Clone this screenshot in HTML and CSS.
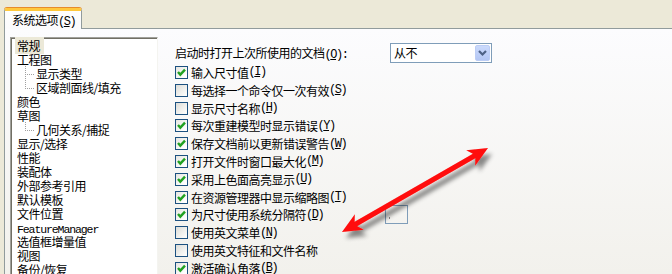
FILE: index.html
```html
<!DOCTYPE html>
<html>
<head>
<meta charset="utf-8">
<link rel="stylesheet" href="styles.css">
</head>
<body>
<div class="tabbar">
  <div class="tab">系统选项<span class="a">(<u>S</u>)</span></div>
</div>
<div class="panel">
  <ul class="tree">
    <li><span class="sel">常规</span></li>
    <li>工程图</li>
    <li class="child mid">显示类型</li>
    <li class="child">区域剖面线/填充</li>
    <li>颜色</li>
    <li>草图</li>
    <li class="child">几何关系/捕捉</li>
    <li>显示/选择</li>
    <li>性能</li>
    <li>装配体</li>
    <li>外部参考引用</li>
    <li>默认模板</li>
    <li>文件位置</li>
    <li><span class="fm">FeatureManager</span></li>
    <li>选值框增量值</li>
    <li>视图</li>
    <li>备份/恢复</li>
  </ul>
  <div class="opts">
    <div class="head">
      <span class="headlabel">启动时打开上次所使用的文档<span class="a">(<u>O</u>):</span></span>
      <div class="combo"><span class="combotext">从不</span><span class="combobtn"><svg width="13" height="15" viewBox="0 0 13 15"><polyline points="3,6 6.5,9.5 10,6" fill="none" stroke="#4d6185" stroke-width="2.2"/></svg></span></div>
    </div>
    <div class="row"><span class="cb on"><svg width="11" height="11" viewBox="0 0 11 11"><polyline points="2,5 4.3,7.6 9,2.6" fill="none" stroke="#21a121" stroke-width="2.4"/></svg></span>输入尺寸值<span class="a">(<u>I</u>)</span></div>
    <div class="row"><span class="cb"></span>每选择一个命令仅一次有效<span class="a">(<u>S</u>)</span></div>
    <div class="row"><span class="cb"></span>显示尺寸名称<span class="a">(<u>H</u>)</span></div>
    <div class="row"><span class="cb on"><svg width="11" height="11" viewBox="0 0 11 11"><polyline points="2,5 4.3,7.6 9,2.6" fill="none" stroke="#21a121" stroke-width="2.4"/></svg></span>每次重建模型时显示错误<span class="a">(<u>Y</u>)</span></div>
    <div class="row"><span class="cb on"><svg width="11" height="11" viewBox="0 0 11 11"><polyline points="2,5 4.3,7.6 9,2.6" fill="none" stroke="#21a121" stroke-width="2.4"/></svg></span>保存文档前以更新错误警告<span class="a">(<u>W</u>)</span></div>
    <div class="row"><span class="cb on"><svg width="11" height="11" viewBox="0 0 11 11"><polyline points="2,5 4.3,7.6 9,2.6" fill="none" stroke="#21a121" stroke-width="2.4"/></svg></span>打开文件时窗口最大化<span class="a">(<u>M</u>)</span></div>
    <div class="row"><span class="cb on"><svg width="11" height="11" viewBox="0 0 11 11"><polyline points="2,5 4.3,7.6 9,2.6" fill="none" stroke="#21a121" stroke-width="2.4"/></svg></span>采用上色面高亮显示<span class="a">(<u>U</u>)</span></div>
    <div class="row"><span class="cb on"><svg width="11" height="11" viewBox="0 0 11 11"><polyline points="2,5 4.3,7.6 9,2.6" fill="none" stroke="#21a121" stroke-width="2.4"/></svg></span>在资源管理器中显示缩略图<span class="a">(<u>T</u>)</span></div>
    <div class="row"><span class="sep"><span class="cb on"><svg width="11" height="11" viewBox="0 0 11 11"><polyline points="2,5 4.3,7.6 9,2.6" fill="none" stroke="#21a121" stroke-width="2.4"/></svg></span>为尺寸使用系统分隔符<span class="a">(<u>D</u>)</span></span><span class="sepbox"><span class="caret"></span></span></div>
    <div class="row"><span class="cb"></span>使用英文菜单<span class="a">(<u>N</u>)</span></div>
    <div class="row"><span class="cb"></span>使用英文特征和文件名称</div>
    <div class="row"><span class="cb on"><svg width="11" height="11" viewBox="0 0 11 11"><polyline points="2,5 4.3,7.6 9,2.6" fill="none" stroke="#21a121" stroke-width="2.4"/></svg></span>激活确认角落<span class="a">(<u>B</u>)</span></div>
  </div>
</div>
<svg class="arrow" width="672" height="274" viewBox="0 0 672 274">
  <defs>
    <filter id="sh" x="-20%" y="-20%" width="140%" height="160%">
      <feDropShadow dx="4" dy="6" stdDeviation="2.2" flood-color="#000" flood-opacity="0.45"/>
    </filter>
  </defs>
  <polygon filter="url(#sh)" fill="#ff0a0a" points="342,232 354.85,214.22 354.62,221.85 472.88,153.81 466.17,150.18 488,148 475.15,165.78 475.38,158.15 357.12,226.19 363.83,229.82"/>
</svg>
</body>
</html>
```
FILE: styles.css
```css
html, body {
  margin: 0;
  padding: 0;
}
body {
  width: 672px;
  height: 274px;
  overflow: hidden;
  background: #ece9d8;
  font-family: "Noto Sans CJK SC", sans-serif;
  font-size: 12px;
  letter-spacing: -0.5px;
  color: #000;
  position: relative;
}
.a {
  font-family: "Liberation Mono", monospace;
  font-size: 12px;
  letter-spacing: -1.44px;
}
u {
  text-decoration: underline;
  text-underline-offset: 1px;
}
.tabbar {
  height: 28px;
  padding-left: 4px;
  display: flex;
  align-items: flex-end;
}
.tab {
  position: relative;
  z-index: 1;
  box-sizing: border-box;
  width: 78px;
  height: 21px;
  margin-bottom: -1px;
  padding-left: 7px;
  border: 1px solid #919b9c;
  border-bottom: none;
  border-top: 3px solid #ffc83c;
  border-radius: 3px 3px 0 0;
  box-shadow: 0 -1px 0 #e68b2c;
  background: linear-gradient(#fefefe, #fbfbfc);
  line-height: 17px;
  white-space: nowrap;
}
.panel {
  box-sizing: border-box;
  height: 246px;
  border-top: 1px solid #919b9c;
  border-left: 1px solid #919b9c;
  margin-left: 4px;
  background: linear-gradient(#fcfcfe, #f2f1ec);
  display: flex;
  align-items: flex-start;
  padding: 8px 0 0 5px;
}
.tree {
  list-style: none;
  margin: 0;
  box-sizing: border-box;
  width: 148px;
  height: 250px;
  flex: none;
  padding: 0;
  background: #fff;
  border: 1px solid;
  border-color: #a0a09a #f4f4f0 #f4f4f0 #a0a09a;
  box-shadow: inset 1px 1px 0 #716f64;
  padding-top: 1px;
}
.tree li {
  height: 14px;
  line-height: 14px;
  padding-left: 6px;
  white-space: nowrap;
  position: relative;
}
.tree li.child {
  padding-left: 25px;
}
.tree li.child::before {
  content: "";
  position: absolute;
  left: 14px;
  top: 7px;
  width: 9px;
  height: 1px;
  background: repeating-linear-gradient(to right, #a0a0a0 0 1px, transparent 1px 2px);
}
.tree li.child::after {
  content: "";
  position: absolute;
  left: 14px;
  top: -1px;
  width: 1px;
  height: 8px;
  background: repeating-linear-gradient(to bottom, #a0a0a0 0 1px, transparent 1px 2px);
}
.tree li.mid::after {
  height: 15px;
}
.sel {
  background: #ece9d8;
  padding: 0 4px 0 2px;
  margin-left: -2px;
}
.fm {
  font-family: "Liberation Mono", monospace;
  font-size: 11.5px;
  letter-spacing: -1.1px;
}
.opts {
  margin-left: 17px;
  margin-top: 5px;
  display: flex;
  flex-direction: column;
}
.head {
  height: 21.6px;
  display: flex;
  align-items: center;
}
.headlabel {
  width: 215px;
  white-space: nowrap;
}
.combo {
  box-sizing: border-box;
  width: 102px;
  height: 20px;
  border: 1px solid #7f9db9;
  background: #fff;
  display: flex;
  align-items: center;
  justify-content: space-between;
  padding: 1px;
}
.combotext {
  padding-left: 2px;
  line-height: 16px;
}
.combobtn {
  box-sizing: border-box;
  width: 15px;
  height: 16px;
  border-radius: 2px;
  border: 1px solid #bccdf5;
  background: linear-gradient(#cbdafc, #b3c6f4);
  display: flex;
  align-items: center;
  justify-content: center;
}
.row {
  height: 17.8px;
  display: flex;
  align-items: center;
  white-space: nowrap;
}
.cb {
  box-sizing: border-box;
  width: 13px;
  height: 13px;
  flex: none;
  border: 1px solid #1c5180;
  background: linear-gradient(135deg, #dcdcd7, #fbfbf9 85%);
  margin-right: 3px;
  display: flex;
  align-items: center;
  justify-content: center;
}
.cb.on {
  background: linear-gradient(135deg, #e6e6e1, #ffffff 85%);
}
.sep {
  width: 210px;
  display: flex;
  align-items: center;
}
.sepbox {
  box-sizing: border-box;
  width: 23px;
  height: 19px;
  border: 1px solid #7f9db9;
  position: relative;
}
.caret {
  position: absolute;
  left: 3px;
  top: 11px;
  width: 1px;
  height: 2px;
  background: #8a8a8a;
}
.arrow {
  position: absolute;
  left: 0;
  top: 0;
  pointer-events: none;
}
```
